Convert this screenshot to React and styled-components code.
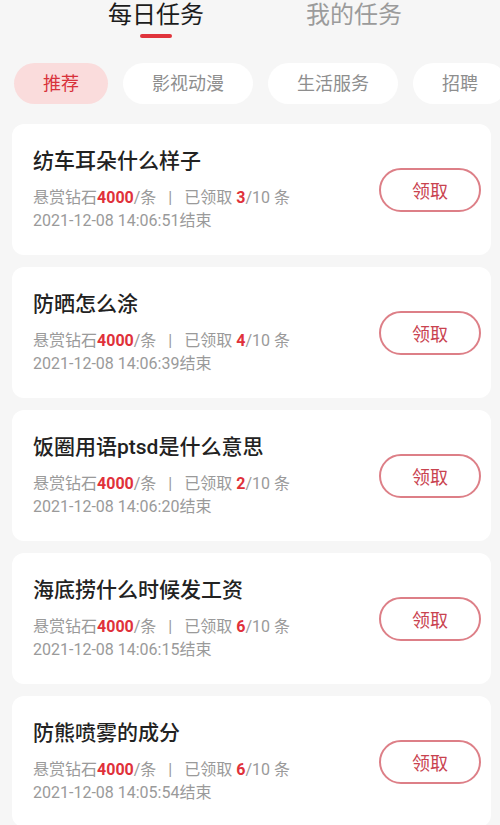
import React from 'react';
import styled, { createGlobalStyle } from 'styled-components';

const GlobalStyle = createGlobalStyle`
    html, body {
        margin: 0;
        padding: 0;
        background: #f6f6f6;
        font-family: Roboto, "Noto Sans CJK SC", "Noto Sans", sans-serif;
    }
`;

const Page = styled.div`
    width: 500px;
    height: 825px;
    overflow: hidden;
    background: #f6f6f6;
`;

const TabBar = styled.nav`
    display: flex;
    align-items: flex-start;
    gap: 102px;
    padding-left: 108px;
    height: 38px;
`;

const Tab = styled.div`
    display: flex;
    flex-direction: column;
    align-items: center;
    gap: 3px;
    font-size: 24px;
    line-height: 31px;
    color: ${(p) => (p.$active ? '#1c1c1c' : '#9b9b9b')};
`;

const Indicator = styled.span`
    width: 32px;
    height: 4px;
    border-radius: 2px;
    background: #e0343c;
`;

const ChipRow = styled.div`
    display: flex;
    gap: 15px;
    margin-top: 25px;
    padding-left: 14px;
    white-space: nowrap;
    overflow: hidden;
`;

const Chip = styled.div`
    flex: none;
    height: 41px;
    line-height: 41px;
    padding: 0 29px;
    border-radius: 21px;
    font-size: 18px;
    background: ${(p) => (p.$active ? '#fadcdc' : '#ffffff')};
    color: ${(p) => (p.$active ? '#d8323b' : '#8e8e8e')};
`;

const List = styled.div`
    display: flex;
    flex-direction: column;
    gap: 12px;
    margin-top: 20px;
    padding: 0 9px 0 12px;
`;

const Card = styled.article`
    flex: none;
    height: 131px;
    display: flex;
    align-items: center;
    justify-content: space-between;
    padding: 0 10px 0 21px;
    background: #ffffff;
    border-radius: 12px;
`;

const Info = styled.div`
    display: flex;
    flex-direction: column;
`;

const Title = styled.h3`
    margin: 0 0 11px;
    font-size: 21px;
    line-height: 28px;
    font-weight: 500;
    color: #222;
`;

const Line = styled.div`
    font-size: 16px;
    line-height: 23px;
    color: #9a9a9a;
`;

const Red = styled.b`
    color: #e0313a;
    font-weight: 700;
`;

const Sep = styled.span`
    margin: 0 12px;
`;

const TakeButton = styled.button`
    flex: none;
    width: 102px;
    height: 44px;
    border: 2px solid #dd7f87;
    border-radius: 22px;
    background: #fff;
    color: #c9434f;
    font-family: inherit;
    font-size: 18px;
`;

const tasks = [
    { title: '纺车耳朵什么样子', taken: 3, end: '2021-12-08 14:06:51' },
    { title: '防晒怎么涂', taken: 4, end: '2021-12-08 14:06:39' },
    { title: '饭圈用语ptsd是什么意思', taken: 2, end: '2021-12-08 14:06:20' },
    { title: '海底捞什么时候发工资', taken: 6, end: '2021-12-08 14:06:15' },
    { title: '防熊喷雾的成分', taken: 6, end: '2021-12-08 14:05:54' },
];

const chips = ['推荐', '影视动漫', '生活服务', '招聘'];

export default function App() {
    return (
        <Page>
            <GlobalStyle />
            <TabBar>
                <Tab $active>
                    每日任务
                    <Indicator />
                </Tab>
                <Tab>我的任务</Tab>
            </TabBar>
            <ChipRow>
                {chips.map((c, i) => (
                    <Chip key={c} $active={i === 0}>
                        {c}
                    </Chip>
                ))}
            </ChipRow>
            <List>
                {tasks.map((t) => (
                    <Card key={t.title}>
                        <Info>
                            <Title>{t.title}</Title>
                            <Line>
                                悬赏钻石<Red>4000</Red>/条<Sep>|</Sep>已领取{' '}
                                <Red>{t.taken}</Red>/10 条
                            </Line>
                            <Line>{t.end}结束</Line>
                        </Info>
                        <TakeButton>领取</TakeButton>
                    </Card>
                ))}
            </List>
        </Page>
    );
}
